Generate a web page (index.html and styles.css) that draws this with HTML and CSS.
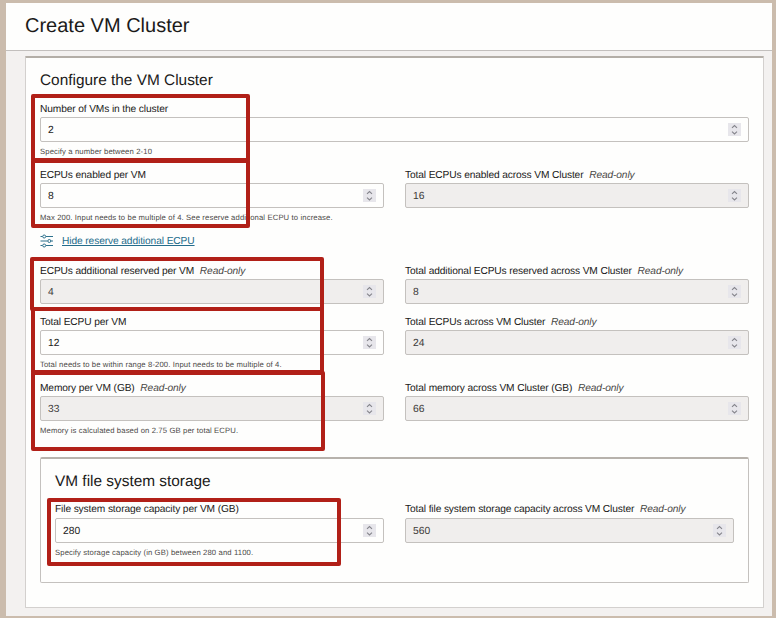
FILE: index.html
```html
<!DOCTYPE html>
<html lang="en">
<head>
<meta charset="utf-8">
<title>Create VM Cluster</title>
<link rel="stylesheet" href="styles.css">
</head>
<body>
<svg class="defs" width="0" height="0" aria-hidden="true">
  <symbol id="stepper" viewBox="0 0 13 13"><path d="M4 4.900 6.500 2.500 9 4.900M4 8.600 6.500 11 9 8.600" fill="none" stroke="#85858c" stroke-width="1.100"/></symbol>
</svg>
<div class="window">
  <header class="header"><h1>Create VM Cluster</h1></header>
  <main class="card">
    <h2>Configure the VM Cluster</h2>
    <div class="grid">
      <div class="field wide">
        <div class="label">Number of VMs in the cluster</div>
        <div class="input"><span>2</span><svg class="stepper"><use href="#stepper"/></svg></div>
        <div class="help">Specify a number between 2-10</div>
      </div>
      <div class="field">
        <div class="label">ECPUs enabled per VM</div>
        <div class="input"><span>8</span><svg class="stepper"><use href="#stepper"/></svg></div>
        <div class="help">Max 200. Input needs to be multiple of 4. See reserve additional ECPU to increase.</div>
      </div>
      <div class="field">
        <div class="label">Total ECPUs enabled across VM Cluster <em>Read-only</em></div>
        <div class="input readonly"><span>16</span><svg class="stepper"><use href="#stepper"/></svg></div>
      </div>
      <div class="toggle wide">
        <svg class="sliders" viewBox="0 0 14 14" fill="none" stroke="#2d718d" stroke-width="1">
          <path d="M.5 2.5h2M6 2.5h7M.5 7h7M11 7h2M.5 11.500h2M6 11.500h7"/>
          <circle cx="4.200" cy="2.500" r="1.500"/><circle cx="9.300" cy="7" r="1.500"/><circle cx="4.200" cy="11.500" r="1.500"/>
        </svg>
        <a class="link">Hide reserve additional ECPU</a>
      </div>
      <div class="field">
        <div class="label">ECPUs additional reserved per VM <em>Read-only</em></div>
        <div class="input readonly"><span>4</span><svg class="stepper"><use href="#stepper"/></svg></div>
      </div>
      <div class="field">
        <div class="label">Total additional ECPUs reserved across VM Cluster <em>Read-only</em></div>
        <div class="input readonly"><span>8</span><svg class="stepper"><use href="#stepper"/></svg></div>
      </div>
      <div class="field">
        <div class="label">Total ECPU per VM</div>
        <div class="input"><span>12</span><svg class="stepper"><use href="#stepper"/></svg></div>
        <div class="help">Total needs to be within range 8-200. Input needs to be multiple of 4.</div>
      </div>
      <div class="field">
        <div class="label">Total ECPUs across VM Cluster <em>Read-only</em></div>
        <div class="input readonly"><span>24</span><svg class="stepper"><use href="#stepper"/></svg></div>
      </div>
      <div class="field">
        <div class="label">Memory per VM (GB) <em>Read-only</em></div>
        <div class="input readonly"><span>33</span><svg class="stepper"><use href="#stepper"/></svg></div>
        <div class="help">Memory is calculated based on 2.75 GB per total ECPU.</div>
      </div>
      <div class="field">
        <div class="label">Total memory across VM Cluster (GB) <em>Read-only</em></div>
        <div class="input readonly"><span>66</span><svg class="stepper"><use href="#stepper"/></svg></div>
      </div>
    </div>
    <section class="storage">
      <h2>VM file system storage</h2>
      <div class="grid">
        <div class="field">
          <div class="label">File system storage capacity per VM (GB)</div>
          <div class="input"><span>280</span><svg class="stepper"><use href="#stepper"/></svg></div>
          <div class="help">Specify storage capacity (in GB) between 280 and 1100.</div>
        </div>
        <div class="field">
          <div class="label">Total file system storage capacity across VM Cluster <em>Read-only</em></div>
          <div class="input readonly"><span>560</span><svg class="stepper"><use href="#stepper"/></svg></div>
        </div>
      </div>
    </section>
  </main>
</div>
<div class="mark mark-vms"></div>
<div class="mark mark-enabled"></div>
<div class="mark mark-reserved"></div>
<div class="mark mark-total"></div>
<div class="mark mark-memory"></div>
<div class="mark mark-storage"></div>
</body>
</html>
```
FILE: styles.css
```css
* { box-sizing: border-box; }
body {
  margin: 0;
  height: 618px;
  padding: 3px 4px 2px 6px;
  position: relative;
  overflow: hidden;
  background: #cbbcad;
  color: #1b1a19;
  font-family: "Liberation Sans", Arial, sans-serif;
  text-rendering: geometricPrecision;
}
.defs { position: absolute; }
.window { height: 613px; background: #f3f1f0; }
.header {
  height: 48px;
  padding: 11px 19px 0;
  background: #fefefd;
  border-bottom: 1px solid #c2bfbd;
}
h1, h2 { margin: 0; font-weight: 400; }
h1 { font-size: 20px; line-height: 24px; }
h2 { font-size: 15.4px; line-height: 20px; }
.card {
  width: 739px;
  height: 552px;
  margin: 5px 0 0 19px;
  padding: 13px 14px 0;
  background: #fefefd;
  border: 1px solid #d3d0ce;
  border-top: 2px solid #b3aea7;
  border-radius: 1px;
}
.grid {
  display: grid;
  grid-template-columns: 1fr 1fr;
  gap: 11px 21px;
  margin-top: 11px;
}
.wide { grid-column: 1 / -1; }
.label { height: 15px; font-size: 10.2px; letter-spacing: -0.12px; line-height: 16px; white-space: nowrap; }
.label em { margin-left: 3px; color: #494745; }
.input {
  display: flex;
  align-items: center;
  justify-content: space-between;
  height: 25px;
  padding: 0 7px;
  border: 1px solid #c4c1be;
  border-radius: 2px;
  background: #fefefd;
  font-size: 10.3px;
}
.input span { padding-top: 2px; }
.readonly { background: #f0eeed; color: #3c3a38; }
.stepper { width: 13px; height: 13px; background: #e7e6eb; }
.help {
  margin-top: 5px;
  height: 10px;
  font-size: 7.7px;
  letter-spacing: 0.12px;
  line-height: 10px;
  color: #4b4947;
  white-space: nowrap;
}
.toggle { display: flex; gap: 8px; height: 19px; }
.sliders { width: 14px; height: 14px; }
.link { font-size: 10.2px; letter-spacing: -0.1px; line-height: 15px; color: #246c8b; text-decoration: underline; text-underline-offset: 1px; }
.storage {
  height: 126px;
  margin-top: 21px;
  padding: 13px 14px 0;
  border: 1px solid #c4c1be;
  border-top: 2px solid #b7b2ac;
  border-radius: 2px;
}
.storage .grid { margin-top: 10px; }
.storage .label { height: 16px; }

/* Highlight frames laid over the form */
.mark { position: absolute; border: 4px solid #b12018; border-radius: 2px; }
.mark-vms { left: 31px; top: 94px; width: 219px; height: 68px; }
.mark-enabled { left: 31px; top: 159px; width: 219px; height: 69px; }
.mark-reserved { left: 30px; top: 257px; width: 294px; height: 54px; }
.mark-total { left: 31px; top: 307px; width: 293px; height: 67px; }
.mark-memory { left: 31px; top: 371px; width: 294px; height: 80px; }
.mark-storage { left: 47px; top: 498px; width: 294px; height: 68px; }
```
